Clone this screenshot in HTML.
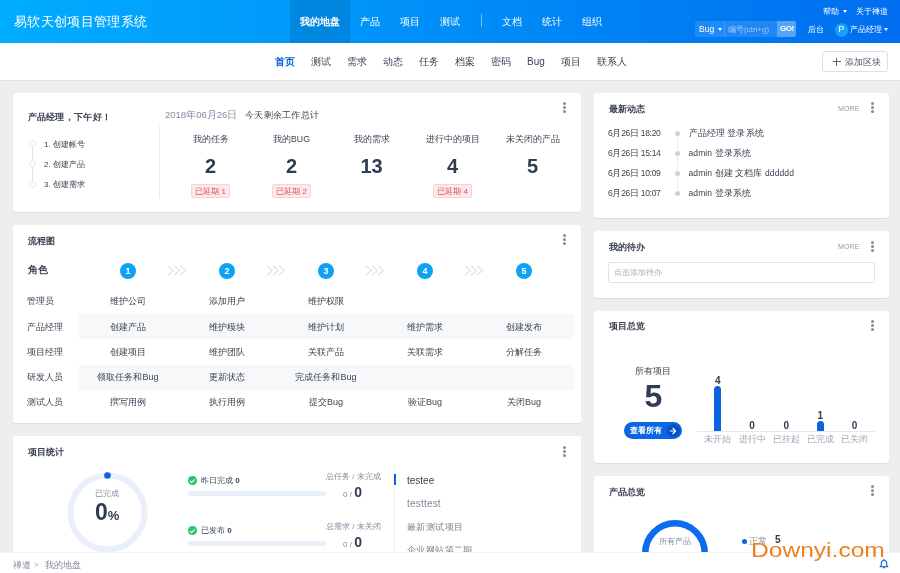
<!DOCTYPE html>
<html><head><meta charset="utf-8">
<style>
*{box-sizing:border-box;margin:0;padding:0}
html,body{width:900px;height:573px;overflow:hidden}
body{position:relative;background:#eeeeee;font-family:"Liberation Sans",sans-serif;color:#3c4353;font-size:9px}
.a{position:absolute;white-space:nowrap}
#hd{position:absolute;left:0;top:0;width:900px;height:43px;background:linear-gradient(to right,#00adff 0%,#006ef0 100%)}
#sub{position:absolute;left:0;top:43px;width:900px;height:37px;background:#fff;box-shadow:0 1px 1px rgba(0,0,0,.05)}
.card{position:absolute;background:#fff;border-radius:3px;box-shadow:0 1px 1px rgba(0,0,0,.07)}
.ttl{position:absolute;font-weight:bold;font-size:9.49px;letter-spacing:.3px;color:#3c4353;white-space:nowrap}
.dots{position:absolute;width:3px;height:11px}
.dots i{position:absolute;left:0;width:3px;height:3px;border-radius:50%;background:#838a9d}
.nav{color:#fff;font-size:9.6px;top:16px}
.sn{font-size:10px;top:55px;color:#3c4353}
.stepc{position:absolute;width:7px;height:7px;border-radius:50%;border:1px solid #e5e5e5;background:#fff}
.step{font-size:8px;color:#3c4353}
.stat{position:absolute;top:133px;width:81px;text-align:center}
.sl{font-size:8.7px;color:#3c4353;height:12px;line-height:12px}
.sn2{font-size:20px;font-weight:bold;color:#313c52;margin-top:10.5px;height:20px;line-height:20px}
.bd{display:inline-block;margin-top:8.5px;padding:0 3px;height:14px;line-height:13px;font-size:8px;color:#dc5552;background:#fde9ea;border:1px solid #f9d2d5;border-radius:2px}
.num{position:absolute;width:16px;height:16px;border-radius:50%;background:#0ea2f5;color:#fff;font-size:9px;font-weight:bold;text-align:center;line-height:16px}
.chev{position:absolute;font-size:8px;color:#e3e6eb;letter-spacing:-2px;line-height:12px;transform:scaleX(.9)}
.fr{font-size:9px;color:#3c4353;line-height:12px}
.fc{width:100px;text-align:center}
.chk{position:absolute;width:8.5px;height:8.5px;border-radius:50%;background:#2bc46f}
.chk:after{content:"";position:absolute;left:2.6px;top:1.6px;width:2px;height:3.6px;border:solid #fff;border-width:0 1.2px 1.2px 0;transform:rotate(45deg)}
.bar{position:absolute;width:138px;height:5px;border-radius:3px;background:#e9f0f9}
.more{font-size:7px;color:#959aa6;letter-spacing:.1px}
.act{font-size:8px;color:#3c4353;line-height:12px}
.adot{position:absolute;width:5px;height:5px;border-radius:50%;background:#cdd3dd}
.blab{margin-top:2.5px;width:30px;text-align:center;font-size:10px;font-weight:bold;color:#313c52;line-height:12px}
.xlab{width:30px;text-align:center;font-size:8.5px;color:#a0a6b4;line-height:12px}
#ft{position:absolute;left:0;top:551.5px;width:900px;height:22px;background:#fff;border-top:1px solid #eef0f3}
</style></head><body><div id="root" style="position:absolute;left:0;top:0;width:900px;height:573px;will-change:transform">
<div id="hd">
  <div class="a" style="left:14px;top:13.1px;font-size:13.49px;letter-spacing:.33px;color:#fff">易软天创项目管理系统</div>
  <div class="a" style="left:290px;top:0;width:60px;height:43px;background:rgba(0,0,0,.1)"></div>
  <div class="a nav" style="left:300px;font-weight:bold">我的地盘</div>
  <div class="a nav" style="left:360px">产品</div>
  <div class="a nav" style="left:400px">项目</div>
  <div class="a nav" style="left:440px">测试</div>
  <div class="a" style="left:481px;top:14px;width:1px;height:13px;background:rgba(255,255,255,.45)"></div>
  <div class="a nav" style="left:502px">文档</div>
  <div class="a nav" style="left:542px">统计</div>
  <div class="a nav" style="left:582px">组织</div>
  <!-- search -->
  <div class="a" style="left:695px;top:21px;width:101px;height:16px;background:rgba(255,255,255,.12);border-radius:2px"></div>
  <div class="a" style="left:724px;top:21px;width:1px;height:16px;background:rgba(255,255,255,.15)"></div>
  <div class="a" style="left:777px;top:21px;width:19px;height:16px;background:rgba(255,255,255,.25);border-radius:0 2px 2px 0"></div>
  <div class="a" style="left:699px;top:24px;font-size:8.5px;color:#fff">Bug</div>
  <div class="a" style="left:717.5px;top:28px;width:0;height:0;border-left:2.5px solid transparent;border-right:2.5px solid transparent;border-top:3px solid #fff"></div>
  <div class="a" style="left:728px;top:24px;font-size:8px;color:rgba(255,255,255,.55)">编号(ctrl+g)</div>
  <div class="a" style="left:780px;top:24.3px;font-size:8px;font-weight:bold;color:#fff;letter-spacing:-.5px">GO!</div>
  <div class="a" style="left:823px;top:6px;font-size:8px;color:#fff">帮助</div>
  <div class="a" style="left:843px;top:10px;width:0;height:0;border-left:2.5px solid transparent;border-right:2.5px solid transparent;border-top:3px solid #fff"></div>
  <div class="a" style="left:856px;top:6px;font-size:8px;color:#fff">关于禅道</div>
  <div class="a" style="left:808px;top:24px;font-size:8px;color:#fff">后台</div>
  <div class="a" style="left:834.5px;top:23px;width:13.5px;height:13.5px;border-radius:50%;background:#1a9ff6;color:#fff;font-size:9px;text-align:center;line-height:13.5px">P</div>
  <div class="a" style="left:850px;top:24px;font-size:8px;color:#fff">产品经理</div>
  <div class="a" style="left:884px;top:28px;width:0;height:0;border-left:2.5px solid transparent;border-right:2.5px solid transparent;border-top:3px solid #fff"></div>
</div>
<div id="sub">
</div>
<div class="a sn" style="left:275px;color:#0c64d8;font-weight:bold">首页</div>
<div class="a sn" style="left:311px">测试</div>
<div class="a sn" style="left:347px">需求</div>
<div class="a sn" style="left:383px">动态</div>
<div class="a sn" style="left:419px">任务</div>
<div class="a sn" style="left:455px">档案</div>
<div class="a sn" style="left:491px">密码</div>
<div class="a sn" style="left:527px;margin-top:1px">Bug</div>
<div class="a sn" style="left:561px">项目</div>
<div class="a sn" style="left:597px">联系人</div>
<div class="a" style="left:822px;top:51px;width:66px;height:21px;border:1px solid #dcdfe5;border-radius:3px;background:#fff"></div>
<div class="a" style="left:845px;top:56px;font-size:9px;color:#4d5466">添加区块</div>
<div class="a" style="left:832.5px;top:61px;width:8px;height:1px;background:#5d6475"></div>
<div class="a" style="left:836px;top:57.5px;width:1px;height:8px;background:#5d6475"></div>

<!-- card 1 -->
<div class="card" style="left:13px;top:93px;width:568px;height:119px"></div>
<div class="ttl" style="left:27.6px;top:110.8px">产品经理，下午好！</div>
<div class="a" style="left:32px;top:144px;width:1px;height:40px;background:#e5e5e5"></div>
<div class="stepc" style="left:29px;top:140px"></div>
<div class="stepc" style="left:29px;top:160px"></div>
<div class="stepc" style="left:29px;top:181px"></div>
<div class="a step" style="left:44px;top:139px">1. 创建帐号</div>
<div class="a step" style="left:44px;top:159px">2. 创建产品</div>
<div class="a step" style="left:44px;top:179px">3. 创建需求</div>
<div class="a" style="left:159px;top:126px;width:1px;height:72px;background:#ececec"></div>
<div class="a" style="left:165px;top:109px;font-size:9.5px;color:#838a9d">2018年06月26日</div>
<div class="a" style="left:245px;top:109px;font-size:9px;letter-spacing:.25px;color:#3c4353">今天剩余工作总计</div>
<div class="stat" style="left:170px"><div class="sl">我的任务</div><div class="sn2">2</div><span class="bd">已延期 1</span></div>
<div class="stat" style="left:251px"><div class="sl">我的BUG</div><div class="sn2">2</div><span class="bd">已延期 2</span></div>
<div class="stat" style="left:331px"><div class="sl">我的需求</div><div class="sn2">13</div></div>
<div class="stat" style="left:412px"><div class="sl">进行中的项目</div><div class="sn2">4</div><span class="bd">已延期 4</span></div>
<div class="stat" style="left:492px"><div class="sl">未关闭的产品</div><div class="sn2">5</div></div>
<div class="dots" style="left:563px;top:102px"><i style="top:0"></i><i style="top:4px"></i><i style="top:8px"></i></div>

<!-- card 2 flow -->
<div class="card" style="left:13px;top:225px;width:568px;height:198px"></div>
<div class="ttl" style="left:27.6px;top:234.8px">流程图</div>
<div class="ttl" style="left:27.6px;top:263.8px;font-size:9.5px;letter-spacing:0">角色</div>
<div class="a" style="left:79px;top:314px;width:495px;height:25.3px;background:#f7f8fa"></div>
<div class="a" style="left:79px;top:365px;width:495px;height:25.3px;background:#f7f8fa"></div>
<div class="num" style="left:120px;top:263px">1</div>
<svg class="a" style="left:167px;top:264.9px" width="20" height="11" viewBox="0 0 20 11"><path d="M1 .9l5.3 4.6-5.3 4.6M7.1 .9l5.3 4.6-5.3 4.6M13.2 .9l5.3 4.6-5.3 4.6" fill="none" stroke="#e6e6e8" stroke-width="1.4"/></svg>
<div class="num" style="left:219px;top:263px">2</div>
<svg class="a" style="left:266px;top:264.9px" width="20" height="11" viewBox="0 0 20 11"><path d="M1 .9l5.3 4.6-5.3 4.6M7.1 .9l5.3 4.6-5.3 4.6M13.2 .9l5.3 4.6-5.3 4.6" fill="none" stroke="#e6e6e8" stroke-width="1.4"/></svg>
<div class="num" style="left:318px;top:263px">3</div>
<svg class="a" style="left:365px;top:264.9px" width="20" height="11" viewBox="0 0 20 11"><path d="M1 .9l5.3 4.6-5.3 4.6M7.1 .9l5.3 4.6-5.3 4.6M13.2 .9l5.3 4.6-5.3 4.6" fill="none" stroke="#e6e6e8" stroke-width="1.4"/></svg>
<div class="num" style="left:417px;top:263px">4</div>
<svg class="a" style="left:464px;top:264.9px" width="20" height="11" viewBox="0 0 20 11"><path d="M1 .9l5.3 4.6-5.3 4.6M7.1 .9l5.3 4.6-5.3 4.6M13.2 .9l5.3 4.6-5.3 4.6" fill="none" stroke="#e6e6e8" stroke-width="1.4"/></svg>
<div class="num" style="left:516px;top:263px">5</div>
<div class="a fr" style="left:27px;top:295px">管理员</div>
<div class="a fr fc" style="left:78px;top:295px">维护公司</div>
<div class="a fr fc" style="left:177px;top:295px">添加用户</div>
<div class="a fr fc" style="left:276px;top:295px">维护权限</div>
<div class="a fr" style="left:27px;top:320.5px">产品经理</div>
<div class="a fr fc" style="left:78px;top:320.5px">创建产品</div>
<div class="a fr fc" style="left:177px;top:320.5px">维护模块</div>
<div class="a fr fc" style="left:276px;top:320.5px">维护计划</div>
<div class="a fr fc" style="left:375px;top:320.5px">维护需求</div>
<div class="a fr fc" style="left:474px;top:320.5px">创建发布</div>
<div class="a fr" style="left:27px;top:345.5px">项目经理</div>
<div class="a fr fc" style="left:78px;top:345.5px">创建项目</div>
<div class="a fr fc" style="left:177px;top:345.5px">维护团队</div>
<div class="a fr fc" style="left:276px;top:345.5px">关联产品</div>
<div class="a fr fc" style="left:375px;top:345.5px">关联需求</div>
<div class="a fr fc" style="left:474px;top:345.5px">分解任务</div>
<div class="a fr" style="left:27px;top:371px">研发人员</div>
<div class="a fr fc" style="left:78px;top:371px">领取任务和Bug</div>
<div class="a fr fc" style="left:177px;top:371px">更新状态</div>
<div class="a fr fc" style="left:276px;top:371px">完成任务和Bug</div>
<div class="a fr" style="left:27px;top:396px">测试人员</div>
<div class="a fr fc" style="left:78px;top:396px">撰写用例</div>
<div class="a fr fc" style="left:177px;top:396px">执行用例</div>
<div class="a fr fc" style="left:276px;top:396px">提交Bug</div>
<div class="a fr fc" style="left:375px;top:396px">验证Bug</div>
<div class="a fr fc" style="left:474px;top:396px">关闭Bug</div>
<div class="dots" style="left:563px;top:234px"><i style="top:0"></i><i style="top:4px"></i><i style="top:8px"></i></div>

<!-- card 3 stats -->
<div class="card" style="left:13px;top:436px;width:568px;height:140px"></div>
<div class="ttl" style="left:27.6px;top:445.8px">项目统计</div>
<div class="dots" style="left:563px;top:446px"><i style="top:0"></i><i style="top:4px"></i><i style="top:8px"></i></div>
<svg class="a" style="left:67px;top:472px" width="81" height="81" viewBox="0 0 81 81"><circle cx="40.5" cy="40.5" r="37" fill="none" stroke="#e9f0f9" stroke-width="6"/><circle cx="40.5" cy="3.5" r="3.3" fill="#0b63e0"/></svg>
<div class="a" style="left:95px;top:488px;font-size:8px;color:#838a9d">已完成</div>
<div class="a" style="left:95px;top:500.5px;font-size:23px;font-weight:bold;color:#313c52;line-height:23px">0<span style="font-size:13px">%</span></div>
<div class="chk" style="left:188px;top:476px"></div>
<div class="a" style="left:201px;top:475px;font-size:8px;color:#3c4353">昨日完成 <b>0</b></div>
<div class="bar" style="left:188px;top:491px"></div>
<div class="a" style="left:326px;top:471px;font-size:8px;color:#838a9d">总任务 / 未完成</div>
<div class="a" style="left:343px;top:485px;font-size:8px;color:#838a9d;line-height:14px">0 /&nbsp;<b style="font-size:14px;color:#313c52">0</b></div>
<div class="chk" style="left:188px;top:526px"></div>
<div class="a" style="left:201px;top:525px;font-size:8px;color:#3c4353">已发布 <b>0</b></div>
<div class="bar" style="left:188px;top:541px"></div>
<div class="a" style="left:326px;top:521px;font-size:8px;color:#838a9d">总需求 / 未关闭</div>
<div class="a" style="left:343px;top:535px;font-size:8px;color:#838a9d;line-height:14px">0 /&nbsp;<b style="font-size:14px;color:#313c52">0</b></div>
<div class="a" style="left:393.5px;top:467px;width:1px;height:90px;background:#eef0f3"></div>
<div class="a" style="left:393.8px;top:474px;width:2.3px;height:10.5px;background:#0b63e0"></div>
<div class="a" style="left:407px;top:474.6px;font-size:10px;color:#3c4353">testee</div>
<div class="a" style="left:407px;top:497.6px;font-size:10px;letter-spacing:.2px;color:#838a9d">testtest</div>
<div class="a" style="left:407px;top:520.5px;font-size:9.49px;letter-spacing:.4px;color:#7d8391">最新测试项目</div>
<div class="a" style="left:407px;top:543.5px;font-size:9.49px;letter-spacing:.4px;color:#7d8391">企业网站第二期</div>

<!-- right -->
<div class="card" style="left:594px;top:93px;width:295px;height:125px"></div>
<div class="ttl" style="left:608.6px;top:102.8px">最新动态</div>
<div class="a more" style="left:838px;top:105px">MORE</div>
<div class="dots" style="left:870.5px;top:102px"><i style="top:0"></i><i style="top:4px"></i><i style="top:8px"></i></div>
<div class="a" style="left:676.5px;top:134px;width:1px;height:60px;background:#eef0f3"></div>
<div class="a act" style="font-size:8.5px;letter-spacing:-.3px;left:608px;top:127.2px">6月26日 18:20</div>
<div class="adot" style="left:674.5px;top:131.2px"></div>
<div class="a act" style="font-size:8.5px;letter-spacing:.1px;left:688.5px;top:127.2px">产品经理 登录系统</div>
<div class="a act" style="font-size:8.5px;letter-spacing:-.3px;left:608px;top:147.2px">6月26日 15:14</div>
<div class="adot" style="left:674.5px;top:151.2px"></div>
<div class="a act" style="font-size:8.5px;letter-spacing:.1px;left:688.5px;top:147.2px">admin 登录系统</div>
<div class="a act" style="font-size:8.5px;letter-spacing:-.3px;left:608px;top:167.2px">6月26日 10:09</div>
<div class="adot" style="left:674.5px;top:171.2px"></div>
<div class="a act" style="font-size:8.5px;letter-spacing:.1px;left:688.5px;top:167.2px">admin 创建 文档库 dddddd</div>
<div class="a act" style="font-size:8.5px;letter-spacing:-.3px;left:608px;top:187.2px">6月26日 10:07</div>
<div class="adot" style="left:674.5px;top:191.2px"></div>
<div class="a act" style="font-size:8.5px;letter-spacing:.1px;left:688.5px;top:187.2px">admin 登录系统</div>
<div class="card" style="left:594px;top:231px;width:295px;height:67px"></div>
<div class="ttl" style="left:608.6px;top:240.8px">我的待办</div>
<div class="a more" style="left:838px;top:242.6px">MORE</div>
<div class="dots" style="left:870.5px;top:241px"><i style="top:0"></i><i style="top:4px"></i><i style="top:8px"></i></div>
<div class="a" style="left:608px;top:262px;width:267px;height:21px;border:1px solid #dfe2e8;border-radius:2px"></div>
<div class="a" style="left:614px;top:267px;font-size:8px;color:#a6abb8">点击添加待办</div>
<div class="card" style="left:594px;top:311px;width:295px;height:152px"></div>
<div class="ttl" style="left:608.6px;top:319.8px">项目总览</div>
<div class="dots" style="left:870.5px;top:320px"><i style="top:0"></i><i style="top:4px"></i><i style="top:8px"></i></div>
<div class="a" style="left:635px;top:366.2px;font-size:8.5px;color:#3c4353">所有项目</div>
<div class="a" style="left:624px;top:381px;width:59px;text-align:center;font-size:32px;font-weight:bold;color:#313c52;line-height:30px">5</div>
<div class="a" style="left:624px;top:422px;width:58px;height:17px;border-radius:9px;background:#0b66e4"></div>
<div class="a" style="left:630px;top:424.8px;font-size:8.4px;font-weight:bold;color:#fff">查看所有</div>
<div class="a" style="left:667px;top:424px;width:13px;height:13px;border-radius:50%;background:#0a4fc0"></div>
<svg class="a" style="left:669.3px;top:426.6px" width="8" height="8" viewBox="0 0 8 8"><path d="M.8 4h5.6M3.6 1l3 3-3 3" fill="none" stroke="#fff" stroke-width="1.2"/></svg>
<div class="a" style="left:697px;top:431px;width:178px;height:1px;background:#e6e9ee"></div>
<div class="a" style="left:714.3px;top:386px;width:7px;height:45px;background:#0b63e0;border-radius:3.5px 3.5px 0 0"></div>
<div class="a blab" style="left:702.8px;top:372.5px">4</div>
<div class="a xlab" style="left:702.8px;top:433px">未开始</div>
<div class="a blab" style="left:737px;top:417.5px">0</div>
<div class="a xlab" style="left:737px;top:433px">进行中</div>
<div class="a blab" style="left:771.3px;top:417.5px">0</div>
<div class="a xlab" style="left:771.3px;top:433px">已挂起</div>
<div class="a" style="left:816.8px;top:420.5px;width:7px;height:10.5px;background:#0b63e0;border-radius:3.5px 3.5px 0 0"></div>
<div class="a blab" style="left:805.3px;top:407px">1</div>
<div class="a xlab" style="left:805.3px;top:433px">已完成</div>
<div class="a blab" style="left:839.5px;top:417.5px">0</div>
<div class="a xlab" style="left:839.5px;top:433px">已关闭</div>
<div class="card" style="left:594px;top:476px;width:295px;height:120px"></div>
<div class="ttl" style="left:608.6px;top:485.8px">产品总览</div>
<div class="dots" style="left:870.5px;top:485px"><i style="top:0"></i><i style="top:4px"></i><i style="top:8px"></i></div>
<svg class="a" style="left:642px;top:520px" width="66" height="66" viewBox="0 0 66 66"><circle cx="33" cy="33" r="29.7" fill="none" stroke="#0b6cf0" stroke-width="6.6"/></svg>
<div class="a" style="left:659px;top:536px;font-size:8px;color:#838a9d">所有产品</div>
<div class="a" style="left:741.5px;top:539px;width:5px;height:5px;border-radius:50%;background:#0b63e0"></div>
<div class="a" style="left:749px;top:535.5px;font-size:8.7px;color:#8a909c">正常</div>
<div class="a" style="left:775px;top:534px;font-size:10px;font-weight:bold;color:#313c52">5</div>

<div id="ft"></div>
<div class="a" style="left:13px;top:560px;font-size:8.5px;color:#838a9d">禅道</div><div class="a" style="left:34px;top:560px;font-size:8px;color:#a3a8b3">&gt;</div><div class="a" style="left:45px;top:560px;font-size:8.5px;color:#838a9d">我的地盘</div>
<div class="a" style="left:751px;top:540.8px;font-size:19.5px;color:#ef8220;line-height:19.5px;letter-spacing:0;transform:scaleX(1.26);transform-origin:0 0">Downyi.com</div>
<svg class="a" style="left:878.7px;top:558.3px" width="10" height="11" viewBox="0 0 10 11"><path d="M2.3 7.6V5.2a2.7 2.7 0 015.4 0v2.4l1.2 1.1H1.1z" fill="none" stroke="#0b63e0" stroke-width="1.1" stroke-linejoin="round"/><path d="M4 9.6h2" stroke="#0b63e0" stroke-width="1.1"/><circle cx="5" cy="1.4" r=".7" fill="#0b63e0"/></svg>
</div></body></html>
